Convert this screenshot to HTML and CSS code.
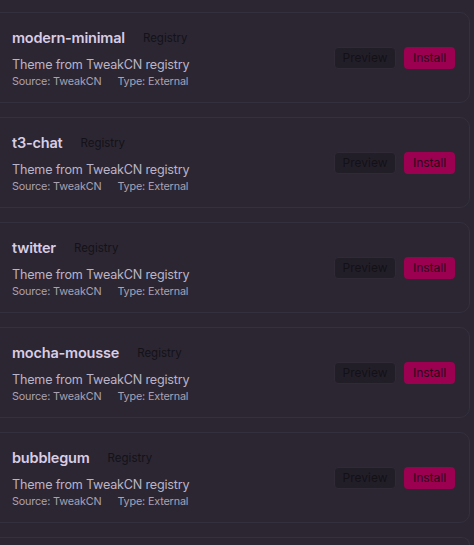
FILE: index.html
```html
<!DOCTYPE html>
<html>
<head>
<meta charset="utf-8">
<link rel="stylesheet" href="styles.css">
</head>
<body>
<div class="list">
  <div class="card">
    <div class="info">
      <div class="head"><span class="name">modern-minimal</span><span class="badge">Registry</span></div>
      <div class="desc">Theme from TweakCN registry</div>
      <div class="meta"><span>Source: TweakCN</span><span>Type: External</span></div>
    </div>
    <div class="actions"><button class="btn preview">Preview</button><button class="btn install">Install</button></div>
  </div>
  <div class="card">
    <div class="info">
      <div class="head"><span class="name">t3-chat</span><span class="badge">Registry</span></div>
      <div class="desc">Theme from TweakCN registry</div>
      <div class="meta"><span>Source: TweakCN</span><span>Type: External</span></div>
    </div>
    <div class="actions"><button class="btn preview">Preview</button><button class="btn install">Install</button></div>
  </div>
  <div class="card">
    <div class="info">
      <div class="head"><span class="name">twitter</span><span class="badge">Registry</span></div>
      <div class="desc">Theme from TweakCN registry</div>
      <div class="meta"><span>Source: TweakCN</span><span>Type: External</span></div>
    </div>
    <div class="actions"><button class="btn preview">Preview</button><button class="btn install">Install</button></div>
  </div>
  <div class="card">
    <div class="info">
      <div class="head"><span class="name">mocha-mousse</span><span class="badge">Registry</span></div>
      <div class="desc">Theme from TweakCN registry</div>
      <div class="meta"><span>Source: TweakCN</span><span>Type: External</span></div>
    </div>
    <div class="actions"><button class="btn preview">Preview</button><button class="btn install">Install</button></div>
  </div>
  <div class="card">
    <div class="info">
      <div class="head"><span class="name">bubblegum</span><span class="badge">Registry</span></div>
      <div class="desc">Theme from TweakCN registry</div>
      <div class="meta"><span>Source: TweakCN</span><span>Type: External</span></div>
    </div>
    <div class="actions"><button class="btn preview">Preview</button><button class="btn install">Install</button></div>
  </div>
  <div class="card card-cut"></div>
</div>
</body>
</html>
```

FILE: styles.css
```css
html, body {
  margin: 0;
  padding: 0;
  background: #2b2632;
  overflow: hidden;
  height: 545px;
}
body {
  font-family: Inter, "Noto Sans", sans-serif;
}
.list {
  display: flex;
  flex-direction: column;
  gap: 14px;
  padding-top: 12px;
  margin-left: -12px;
  margin-right: 4px;
}
.card {
  height: 91px;
  flex: none;
  box-sizing: border-box;
  border: 1px solid #35303e;
  border-radius: 10px;
  background: #2b2632;
  padding: 0 14px 0 23px;
  display: flex;
  align-items: center;
  justify-content: space-between;
}
.card-cut {
  height: 8px;
  border-bottom: none;
  border-radius: 10px 10px 0 0;
}
.info {
  display: flex;
  flex-direction: column;
  padding-top: 2px;
}
.head {
  display: flex;
  align-items: center;
  gap: 18px;
  height: 20px;
}
.name {
  font-size: 14.5px;
  font-weight: 600;
  letter-spacing: -0.2px;
  color: #d8cde5;
}
.badge {
  font-size: 11.5px;
  color: #141218;
}
.desc {
  margin-top: 8px;
  font-size: 12.6px;
  letter-spacing: -0.2px;
  line-height: 18px;
  color: #bcb4c5;
}
.meta {
  display: flex;
  gap: 16px;
  font-size: 10.8px;
  letter-spacing: -0.15px;
  line-height: 16px;
  color: #aaa2b2;
}
.actions {
  display: flex;
  gap: 8px;
}
.btn {
  height: 22px;
  box-sizing: border-box;
  border-radius: 4px;
  font-family: Inter, "Noto Sans", sans-serif;
  font-size: 12px;
  padding: 0;
  cursor: pointer;
}
.preview {
  width: 62px;
  background: #221e28;
  border: 1px solid #2f2a36;
  color: #131116;
}
.install {
  width: 51px;
  background: #9c0050;
  border: none;
  color: #2a0a1a;
}
```
